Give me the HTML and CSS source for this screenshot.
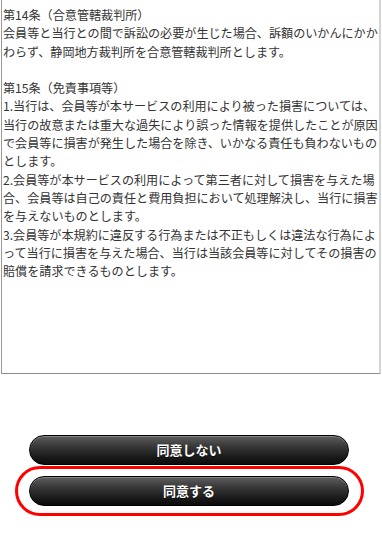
FILE: index.html
```html
<!DOCTYPE html>
<html lang="ja">
<head>
<meta charset="utf-8">
<title>利用規約</title>
<link rel="stylesheet" href="styles.css">
</head>
<body>
<div class="terms">
<p class="para">第14条（合意管轄裁判所）<br>会員等と当行との間で訴訟の必要が生じた場合、訴額のいかんにかかわらず、静岡地方裁判所を合意管轄裁判所とします。</p>
<p class="para">第15条（免責事項等）<br>1.当行は、会員等が本サービスの利用により被った損害については、当行の故意または重大な過失により誤った情報を提供したことが原因で会員等に損害が発生した場合を除き、いかなる責任も負わないものとします。<br>2.会員等が本サービスの利用によって第三者に対して損害を与えた場合、会員等は自己の責任と費用負担において処理解決し、当行に損害を与えないものとします。<br>3.会員等が本規約に違反する行為または不正もしくは違法な行為によって当行に損害を与えた場合、当行は当該会員等に対してその損害の賠償を請求できるものとします。</p>
</div>
<div class="actions">
  <button class="btn" type="button">同意しない</button>
  <div class="agree-ring">
    <button class="btn" type="button">同意する</button>
  </div>
</div>
</body>
</html>
```

FILE: styles.css
```css
html, body {
  margin: 0;
  padding: 0;
  background: #fff;
}
body {
  width: 382px;
  font-family: "Noto Sans CJK JP", "Noto Sans", sans-serif;
}
.terms {
  box-sizing: border-box;
  margin-left: 1px;
  width: 380px;
  height: 374px;
  padding: 6px 0 0 1px;
  border-left: 1px solid #9a9a9a;
  border-bottom: 1px solid #8c8c8c;
  border-right: 2px solid #d4d4d4;
  color: #333;
  font-size: 12.1px;
  line-height: 18.3px;
  overflow: hidden;
}
.para {
  margin: 0 0 18.3px 0;
}
.actions {
  width: 378px;
  padding-top: 61px;
  display: flex;
  flex-direction: column;
  align-items: center;
}
.btn {
  box-sizing: border-box;
  width: 320px;
  height: 30px;
  margin: 0;
  padding: 0;
  border: 1px solid #000;
  border-radius: 15px;
  background: linear-gradient(to bottom, #5e5e5e 0%, #3a3a3a 35%, #1a1a1a 75%, #0c0c0c 100%);
  box-shadow: inset 0 1px 0 rgba(255,255,255,0.25);
  color: #fff;
  font-family: "Noto Sans CJK JP", "Noto Sans", sans-serif;
  font-size: 13px;
  font-weight: bold;
  line-height: 28px;
  text-shadow: 0 1px 1px rgba(0,0,0,0.6);
}
.agree-ring {
  box-sizing: border-box;
  margin-top: 1px;
  width: 349px;
  height: 50px;
  padding-top: 7px;
  border: 3px solid #f00;
  border-radius: 26px;
  display: flex;
  justify-content: center;
}
```
